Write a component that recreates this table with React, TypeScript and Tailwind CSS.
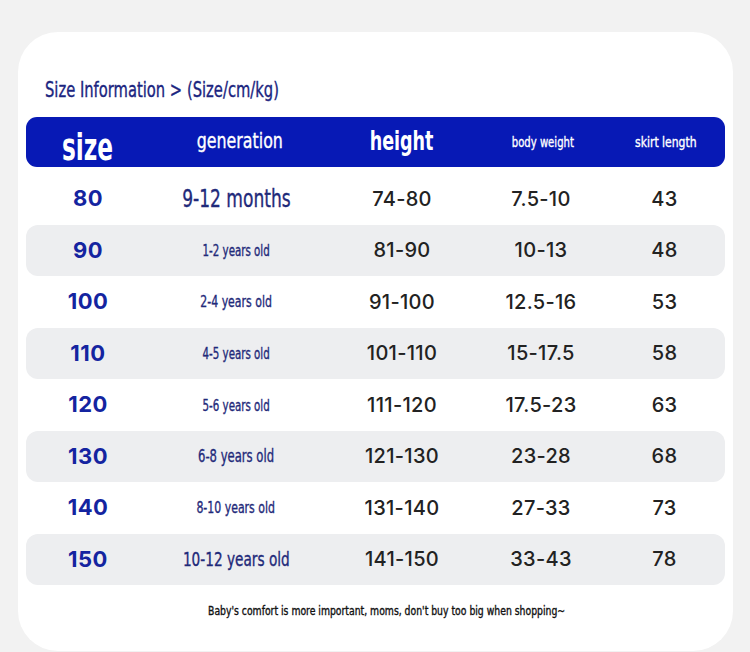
const condensed = '[font-family:"DejaVu_Sans_Condensed","DejaVu_Sans",sans-serif]';
const numeric = '[font-family:Inter,"Open_Sans",sans-serif]';
// reference face is a medium-weight condensed; thicken the regular cut a little
const medium = '[-webkit-text-stroke:0.35px_currentColor]';

interface SizeRow {
  size: string;
  age: string;
  ageClass: string;
  height: string;
  weight: string;
  skirt: string;
}

const ROWS: SizeRow[] = [
  { size: '80', age: '9-12 months', ageClass: 'text-[25px]', height: '74-80', weight: '7.5-10', skirt: '43' },
  { size: '90', age: '1-2 years old', ageClass: 'text-[15px]', height: '81-90', weight: '10-13', skirt: '48' },
  { size: '100', age: '2-4 years old', ageClass: 'text-[16px]', height: '91-100', weight: '12.5-16', skirt: '53' },
  { size: '110', age: '4-5 years old', ageClass: 'text-[15px]', height: '101-110', weight: '15-17.5', skirt: '58' },
  { size: '120', age: '5-6 years old', ageClass: 'text-[15px]', height: '111-120', weight: '17.5-23', skirt: '63' },
  { size: '130', age: '6-8 years old', ageClass: 'text-[17px]', height: '121-130', weight: '23-28', skirt: '68' },
  { size: '140', age: '8-10 years old', ageClass: 'text-[16px]', height: '131-140', weight: '27-33', skirt: '73' },
  { size: '150', age: '10-12 years old', ageClass: 'text-[20px]', height: '141-150', weight: '33-43', skirt: '78' },
];

const GRID = 'grid grid-cols-[124px_176px_152px_126px_121px] items-center';

export default function App() {
  return (
    <div className="w-[750px] h-[652px] bg-[#f2f2f2] pt-[32px] pl-[18px] overflow-hidden">
      <div className="w-[715px] h-[619px] bg-white rounded-[40px] px-[8px] pt-[44px]">
        <h1 className={`${condensed} ${medium} h-[28px] pl-[19px] text-[21px] leading-[28px] text-[#1b2580] mb-[13px]`}>
          <span className="inline-block origin-left scale-x-[0.78] whitespace-nowrap">
            Size Information &gt; (Size/cm/kg)
          </span>
        </h1>

        {/* header bar */}
        <div className={`${GRID} ${condensed} h-[50px] rounded-[11px] bg-[#0719b5] text-white text-center`}>
          <div className="pt-[11px]">
            <span className="inline-block scale-x-[0.68] text-[38px] font-bold leading-none">size</span>
          </div>
          <div className="pl-[4px]">
            <span className={`${medium} inline-block scale-x-[0.8] text-[22px] leading-none`}>generation</span>
          </div>
          <div>
            <span className="inline-block scale-x-[0.75] text-[26px] font-bold leading-none">height</span>
          </div>
          <div className="pl-[3px]">
            <span className={`${medium} inline-block scale-x-[0.8] text-[14px] leading-none whitespace-nowrap`}>
              body weight
            </span>
          </div>
          <div className="pl-[3px]">
            <span className={`${medium} inline-block scale-x-[0.86] text-[14px] leading-none whitespace-nowrap`}>
              skirt length
            </span>
          </div>
        </div>

        <div className="mt-[6px]">
          {ROWS.map((r, i) => (
            <div
              key={r.size}
              className={`${GRID} h-[51.5px] text-center ${i % 2 === 1 ? 'bg-[#edeef0] rounded-[12px]' : ''}`}
            >
              <div className={`${numeric} font-bold text-[22px] tracking-[0.5px] text-[#1424a0]`}>{r.size}</div>
              <div className="pr-[4px]">
                <span
                  className={`${condensed} ${medium} ${r.ageClass} inline-block scale-x-[0.76] whitespace-nowrap text-[#1f2a7a]`}
                >
                  {r.age}
                </span>
              </div>
              <div className={`${numeric} font-medium text-[20px] tracking-[0.3px] text-[#222]`}>{r.height}</div>
              <div className={`${numeric} font-medium text-[20px] tracking-[0.3px] text-[#222]`}>{r.weight}</div>
              <div className={`${numeric} font-medium text-[20px] tracking-[0.3px] text-[#222]`}>{r.skirt}</div>
            </div>
          ))}
        </div>

        <p className={`${condensed} ${medium} mt-[17px] text-center text-[12px] text-[#111] pl-[22px]`}>
          <span className="inline-block scale-x-[0.86] whitespace-nowrap">
            Baby's comfort is more important, moms, don't buy too big when shopping~
          </span>
        </p>
      </div>
    </div>
  );
}
